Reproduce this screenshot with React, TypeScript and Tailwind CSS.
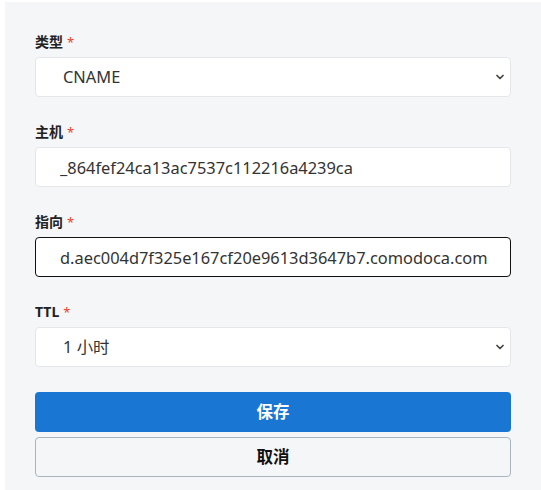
import { ChevronDown } from "lucide-react";

const font = { fontFamily: '"Noto Sans", "Noto Sans CJK SC", sans-serif' };

function Label({ text }: { text: string }) {
  return (
    <label className="mb-[5px] flex h-5 items-center text-[14px] font-bold leading-5 text-[#222]">
      {text}
      <span className="ml-1 text-[13px] font-normal text-[#e8412c]">*</span>
    </label>
  );
}

function SelectField({ label, value }: { label: string; value: string }) {
  return (
    <div className="mb-[25px]">
      <Label text={label} />
      <div className="relative">
        <select
          defaultValue={value}
          className="h-10 w-full appearance-none rounded border border-[#e4e6ea] bg-white pl-[27px] pr-8 text-[16.4px] text-[#333] outline-none"
        >
          <option>{value}</option>
        </select>
        <ChevronDown
          className="pointer-events-none absolute right-[4px] top-[14px] h-3 w-3.5 text-[#444]"
          strokeWidth={3.5}
        />
      </div>
    </div>
  );
}

function TextField({
  label,
  value,
  focused,
}: {
  label: string;
  value: string;
  focused?: boolean;
}) {
  return (
    <div className="mb-[25px]">
      <Label text={label} />
      <input
        defaultValue={value}
        className={
          focused
            ? "h-10 w-full rounded border border-[#111] bg-white pl-[24px] text-[16.4px] text-[#333] outline-none"
            : "h-10 w-full rounded border border-[#e4e6ea] bg-white pl-[24px] text-[16.4px] text-[#333] outline-none"
        }
      />
    </div>
  );
}

export default function App() {
  return (
    <div className="min-h-[490px] bg-white pl-[5px] pt-[2px]" style={font}>
      <div className="min-h-[488px] bg-[#f5f6f8] px-[30px] pt-[30px]">
        <SelectField label="类型" value="CNAME" />
        <TextField label="主机" value="_864fef24ca13ac7537c112216a4239ca" />
        <TextField
          label="指向"
          value="d.aec004d7f325e167cf20e9613d3647b7.comodoca.com"
          focused
        />
        <SelectField label="TTL" value="1 小时" />
        <div className="flex flex-col gap-[5px]">
          <button className="h-10 w-full rounded bg-[#1976d2] text-[16.5px] font-bold text-white">
            保存
          </button>
          <button className="h-10 w-full rounded border border-[#a9b4c2] bg-[#f5f6f8] text-[16.5px] font-bold text-[#111]">
            取消
          </button>
        </div>
      </div>
    </div>
  );
}
